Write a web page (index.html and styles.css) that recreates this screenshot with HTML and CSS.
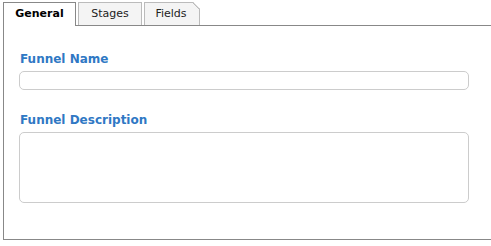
FILE: index.html
```html
<!DOCTYPE html>
<html lang="en">
<head>
    <meta charset="UTF-8">
    <meta name="viewport" content="width=device-width, initial-scale=1.0">
    <title>Funnel</title>
    <link rel="stylesheet" href="styles.css">
</head>
<body>
  <div class="tabs">
    <div class="tab active">General</div>
    <div class="tab">Stages</div>
    <div class="tab fold">Fields</div>
  </div>
  <div class="panel">
    <div class="field">
        <label for="funnel-name">Funnel Name</label>
        <input type="text" id="funnel-name">
    </div>
    <div class="field">
        <label for="funnel-desc">Funnel Description</label>
        <textarea id="funnel-desc"></textarea>
    </div>
  </div>
</body>
</html>
```

FILE: styles.css
```css
*{
    margin: 0;
    padding: 0;
    box-sizing: border-box;
}
body{
    background: white;
    font-family: "DejaVu Sans", Verdana, sans-serif;
    overflow: hidden;
}
.tabs{
    display: flex;
    gap: 2px;
    padding: 2px 0 0 3px;
    height: 26px;
}
.tab{
    position: relative;
    height: 23px;
    border: 1px solid #bbb;
    border-bottom: none;
    background: #f4f4f4;
    font-size: 11px;
    line-height: 22px;
    text-align: center;
    color: #222;
}
.tab:nth-child(2){
    width: 64px;
}
.tab.active{
    width: 73px;
    height: 24px;
    border-color: #888;
    background: white;
    font-weight: bold;
    color: black;
    z-index: 1;
}
.tab.fold{
    width: 56px;
    padding-right: 2px;
    clip-path: polygon(0 0, calc(100% - 7px) 0, 100% 7px, 100% 100%, 0 100%);
}
.tab.fold::after{
    content: "";
    position: absolute;
    top: -1px;
    right: -1px;
    width: 8px;
    height: 8px;
    background: linear-gradient(45deg, transparent 46%, #bbb 46%, #bbb 60%, transparent 60%);
}
.panel{
    margin: -1px 0 0 3px;
    height: 215px;
    border: 1px solid #888;
    border-right: none;
    padding: 26px 0 0 15px;
}
.field{
    display: flex;
    flex-direction: column;
    width: 450px;
}
.field label{
    font-size: 12px;
    font-weight: bold;
    color: #2f78c4;
    padding-left: 1px;
    line-height: 15px;
    margin-bottom: 4px;
}
.field input{
    height: 19px;
    border: 1px solid #ccc;
    border-radius: 5px;
    margin-bottom: 23px;
}
.field textarea{
    height: 71px;
    border: 1px solid #ccc;
    border-radius: 5px;
    resize: none;
}
```
